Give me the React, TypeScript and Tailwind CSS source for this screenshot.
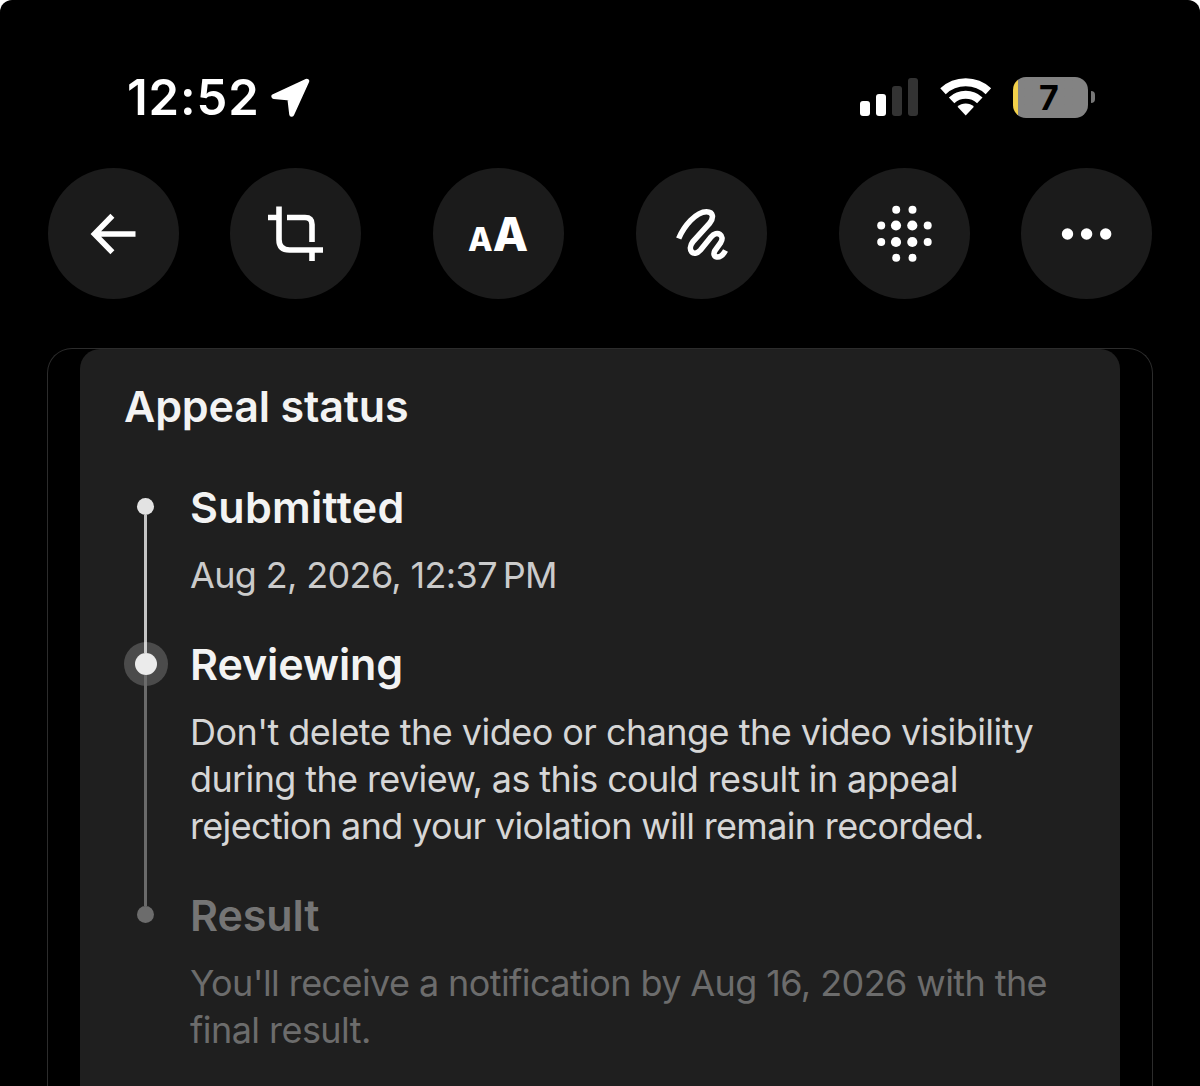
import type { ReactNode } from "react";

type Line = { text: string; tracking: string };

type Step = {
  title: string;
  titleClass: string;
  lines: Line[];
  bodyClass: string;
};

const steps: Step[] = [
  {
    title: "Submitted",
    titleClass: "text-[#f3f3f3] tracking-[0.3px]",
    lines: [{ text: "Aug 2, 2026, 12:37\u2009PM", tracking: "tracking-[-0.65px]" }],
    bodyClass: "text-[#cbcbcb]",
  },
  {
    title: "Reviewing",
    titleClass: "text-[#f3f3f3] tracking-[-0.1px]",
    lines: [
      { text: "Don't delete the video or change the video visibility", tracking: "tracking-[-0.54px]" },
      { text: "during the review, as this could result in appeal", tracking: "tracking-[-0.62px]" },
      { text: "rejection and your violation will remain recorded.", tracking: "tracking-[-0.66px]" },
    ],
    bodyClass: "text-[#d6d6d6]",
  },
  {
    title: "Result",
    titleClass: "text-[#757575] tracking-[-0.1px]",
    lines: [
      { text: "You'll receive a notification by Aug 16, 2026 with the", tracking: "tracking-[-0.59px]" },
      { text: "final result.", tracking: "tracking-[-0.55px]" },
    ],
    bodyClass: "text-[#6c6c6c]",
  },
];

export default function App() {
  return (
    <div className="h-[1086px] w-[1200px] overflow-hidden bg-white font-['Inter',sans-serif]">
      <div className="flex h-full flex-col rounded-t-[12px] bg-black">
        <StatusBar />
        <Toolbar />
        <main className="mx-[47px] mt-[49px] flex-1 overflow-hidden rounded-t-[25px] border border-b-0 border-[#2c2c2c] px-[32px]">
          <AppealCard />
        </main>
      </div>
    </div>
  );
}

function StatusBar() {
  return (
    <header className="flex h-[168px] items-start justify-between pt-[66px] pr-[105px] pl-[127px] text-white">
      <div className="flex h-[62px] items-center">
        <span className="mt-[2px] w-[143px] text-[49px] leading-[62px] font-semibold tracking-[0.9px] whitespace-nowrap">
          12:52
        </span>
        <svg width="42" height="42" viewBox="0 0 42 42" className="mt-[3px]">
          <path
            d="M36.7 3.3 3.9 18.4 19.8 20 21.7 36.3Z"
            fill="white"
            stroke="white"
            strokeWidth="5"
            strokeLinejoin="round"
          />
        </svg>
      </div>
      <div className="flex h-[62px] items-center">
        <div className="flex h-[38px] items-end gap-[6px]">
          <i className="h-[15px] w-[10px] rounded-[3px] bg-white" />
          <i className="h-[22px] w-[10px] rounded-[3px] bg-white" />
          <i className="h-[30px] w-[10px] rounded-[3px] bg-[#333]" />
          <i className="h-[38px] w-[10px] rounded-[3px] bg-[#333]" />
        </div>
        <svg width="52" height="38" viewBox="0 0 52 38" className="ml-[22px]">
          <path d="M25.7 37.5 17.5 28.7A12 12 0 0 1 33.9 28.7Z" fill="white" />
          <path d="M11.6 22.4A20.7 20.7 0 0 1 39.8 22.4" fill="none" stroke="white" strokeWidth="8" />
          <path d="M3 13.2A33.3 33.3 0 0 1 48.4 13.2" fill="none" stroke="white" strokeWidth="8" />
        </svg>
        <div className="ml-[21px] flex h-[41px] w-[75px] items-center justify-center overflow-hidden rounded-[13px] bg-linear-to-r from-[#f2d04b] from-[5px] to-[#838383] to-[5px] pr-[3px] text-[34px] font-bold text-black">
          7
        </div>
        <i className="ml-[3px] h-[12px] w-[4px] rounded-r-[4px] bg-[#777]" />
      </div>
    </header>
  );
}

function Toolbar() {
  return (
    <nav className="flex h-[131px] justify-between px-[48px] text-white">
      <ToolButton>
        <path d="M87.5 66H46M64.4 47.700 46.500 66 64.400 84.300" />
      </ToolButton>
      <ToolButton>
        <path d="M38 49.500H49M49 38.500V71.500Q49 82 59.500 82H93M82 93V82M57 49.500H75Q82 49.500 82 56.500V74" />
      </ToolButton>
      <ToolButton className="ml-[21px]">
        <text x="35" y="82.500" fill="white" stroke="none" fontSize="32" fontWeight="800">
          A
        </text>
        <text x="59.800" y="82.500" fill="white" stroke="none" fontSize="46" fontWeight="800">
          A
        </text>
      </ToolButton>
      <ToolButton className="ml-[21px]">
        <path d="M42.700 70.500C48 58 60 43.700 70.500 43.700C77.500 43.700 78 50 73.500 55.500L57 73.500C50.500 82 57.500 90 64.500 82L75 69C81 61.500 89.500 67.500 84.500 75L79 82.500C75 89.500 84 92.500 89.500 82.500" />
      </ToolButton>
      <ToolButton className="ml-[21px]">
        <MosaicDots />
      </ToolButton>
      <ToolButton>
        <g fill="white" stroke="none">
          <circle cx="46.500" cy="66" r="5.700" />
          <circle cx="65.600" cy="66" r="5.700" />
          <circle cx="84.700" cy="66" r="5.700" />
        </g>
      </ToolButton>
    </nav>
  );
}

function ToolButton({ children, className = "" }: { children: ReactNode; className?: string }) {
  return (
    <button className={`size-[131px] rounded-full bg-[#1b1b1b] ${className}`}>
      <svg width="131" height="131" viewBox="0 0 131 131" fill="none" stroke="white" strokeWidth="5.600">
        {children}
      </svg>
    </button>
  );
}

/* Small dots ring a core of four larger ones */
function MosaicDots() {
  const small = [
    [57.2, 41.8], [73.5, 41.8],
    [42.2, 57.5], [88.7, 57.5],
    [42.2, 74], [88.7, 74],
    [57.2, 89.8], [73.5, 89.8],
  ];
  const large = [[57, 57.5], [73.3, 57.5], [57, 74], [73.3, 74]];
  return (
    <g fill="white" stroke="none">
      {small.map(([x, y], i) => (
        <circle key={i} cx={x} cy={y} r="4" />
      ))}
      {large.map(([x, y], i) => (
        <circle key={i} cx={x} cy={y} r="5.100" />
      ))}
    </g>
  );
}

function AppealCard() {
  return (
    <section className="h-full rounded-t-[20px] bg-[#1f1f1f] px-[44px] pt-[29px]">
      <h1 className="text-[43px] leading-[56px] font-semibold tracking-[-0.15px] whitespace-nowrap text-[#f3f3f3]">
        Appeal status
      </h1>
      <div className="mt-[45px] flex">
        <Rail />
        <div className="ml-[23px] flex flex-col gap-[37px]">
          {steps.map((step) => (
            <article key={step.title}>
              <h2 className={`text-[43px] leading-[56px] font-semibold whitespace-nowrap ${step.titleClass}`}>
                {step.title}
              </h2>
              <p className={`mt-[17px] text-[36px] leading-[47px] ${step.bodyClass}`}>
                {step.lines.map((line) => (
                  <span key={line.text} className={`block whitespace-nowrap ${line.tracking}`}>
                    {line.text}
                  </span>
                ))}
              </p>
            </article>
          ))}
        </div>
      </div>
    </section>
  );
}

function Rail() {
  return (
    <div className="flex w-[43px] flex-col items-center pt-[19px]">
      <i className="size-[17px] rounded-full bg-[#e3e3e3]" />
      <i className="h-[138px] w-[3px] bg-[#c4c4c4]" />
      <i className="size-[22px] rounded-full bg-[#ebebeb] ring-[11px] ring-white/20" />
      <i className="h-[231px] w-[3px] bg-[#6a6a6a]" />
      <i className="size-[17px] rounded-full bg-[#6c6c6c]" />
    </div>
  );
}
